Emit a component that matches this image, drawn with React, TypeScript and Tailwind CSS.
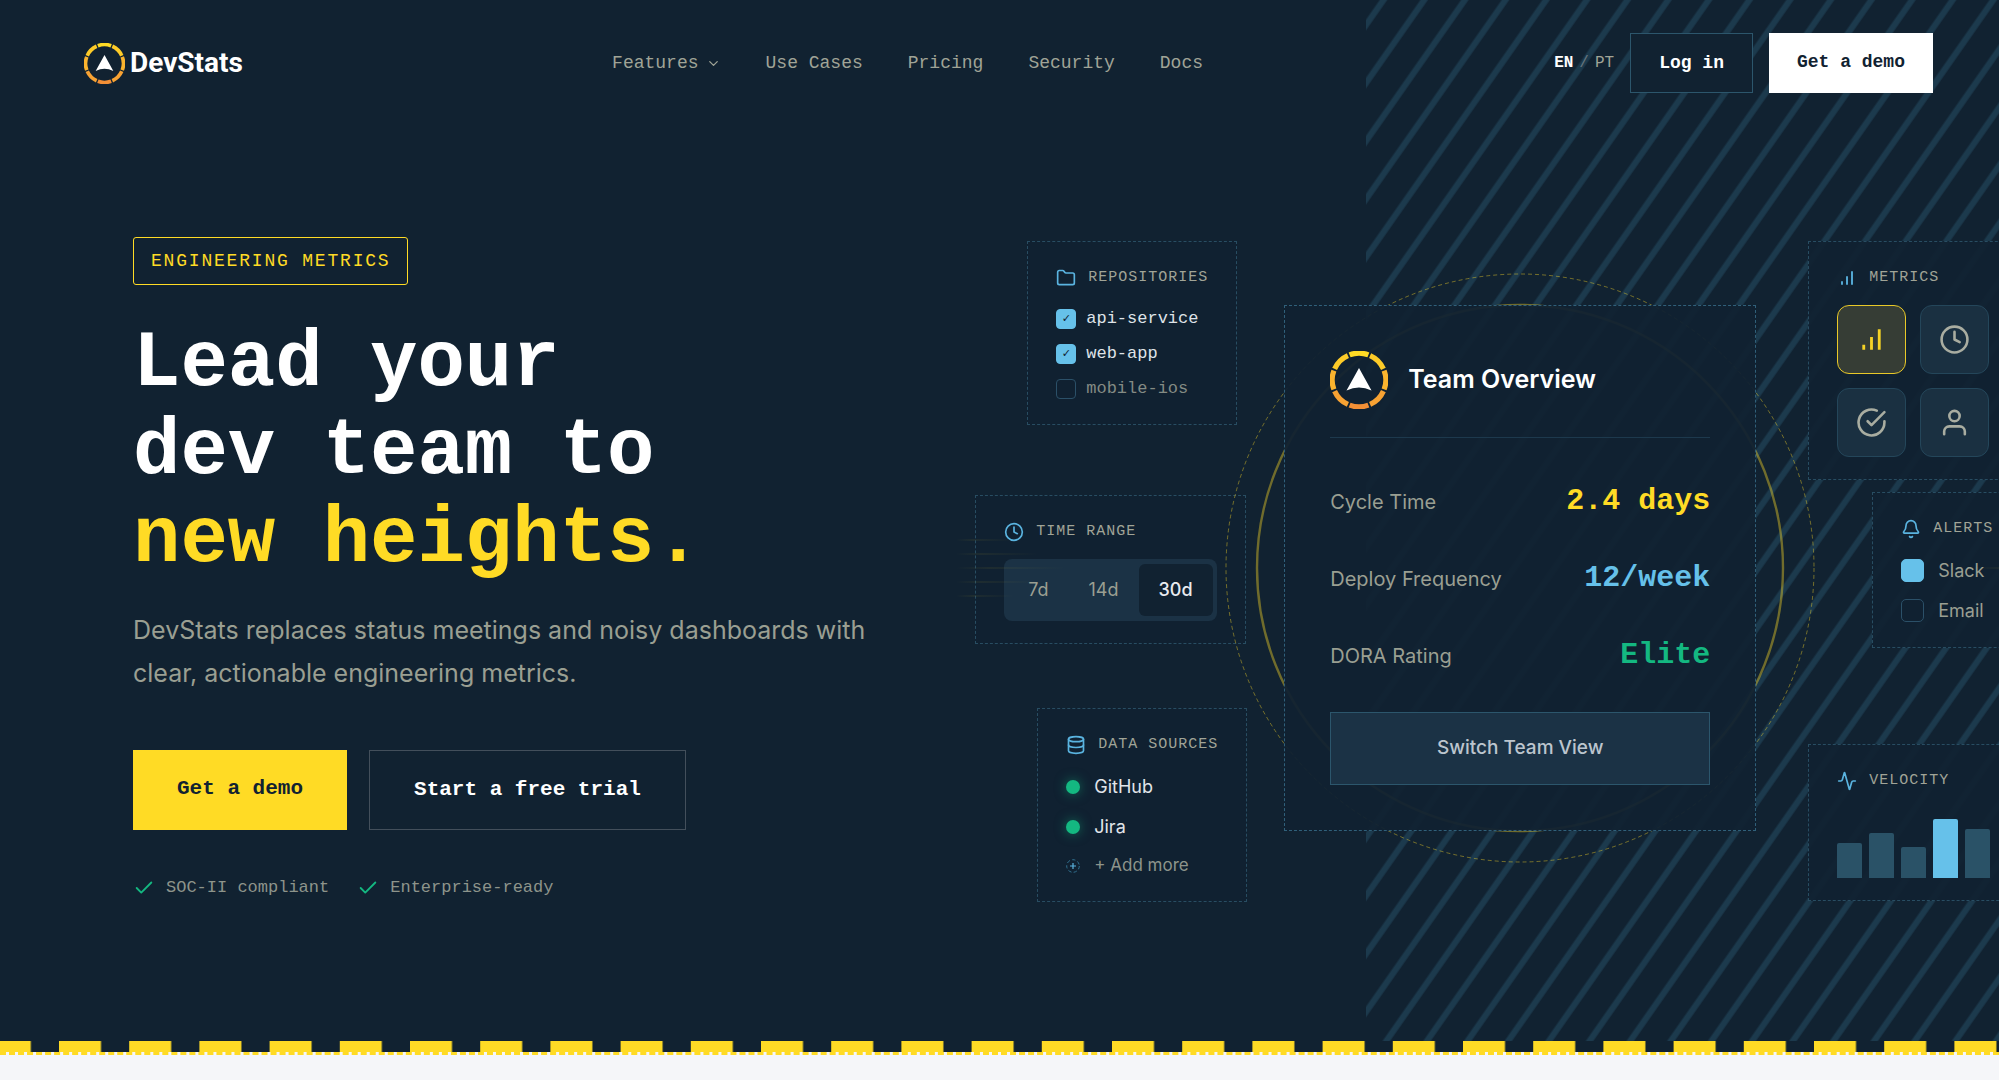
import React from 'react';
import { Activity, Bell, Check, ChevronDown, Clock, Database, Folder } from 'lucide-react';

const SEGMENTS = [
  { angle: 0, color: '#ffdb25' },
  { angle: 45, color: '#fdcb28' },
  { angle: 90, color: '#fbb42e' },
  { angle: 135, color: '#f7a233' },
  { angle: 180, color: '#f39036' },
  { angle: 225, color: '#f7a233' },
  { angle: 270, color: '#fbb42e' },
  { angle: 315, color: '#fdcb28' },
];

const LogoMark = ({ className }: { className: string }) => (
  <svg viewBox="0 0 58 58" fill="none" className={className} aria-hidden="true">
    {SEGMENTS.map((s) => (
      <path
        key={s.angle}
        d="M19.6 3.9 A26.2 26.2 0 0 1 38.4 3.9"
        transform={`rotate(${s.angle} 29 29)`}
        stroke={s.color}
        strokeWidth="5.2"
      />
    ))}
    <path d="M29 17 L41.5 39.5 Q29 33.5 16.5 39.5 Z" fill="#fff" />
  </svg>
);

const BarsIcon = ({ className }: { className: string }) => (
  <svg viewBox="0 0 24 24" fill="none" stroke="currentColor" strokeWidth="2.2" className={className} aria-hidden="true">
    <path d="M18 20V4M12 20V10M6 20v-4" />
  </svg>
);

const CheckCircleIcon = ({ className }: { className: string }) => (
  <svg viewBox="0 0 24 24" fill="none" stroke="currentColor" strokeWidth="2" strokeLinecap="round" strokeLinejoin="round" className={className} aria-hidden="true">
    <path d="M22 11.08V12a10 10 0 1 1-5.93-9.14" />
    <path d="M22 4 12 14.01l-3-3" />
  </svg>
);

const UserIcon = ({ className }: { className: string }) => (
  <svg viewBox="0 0 24 24" fill="none" stroke="currentColor" strokeWidth="2" strokeLinecap="round" strokeLinejoin="round" className={className} aria-hidden="true">
    <path d="M20 21v-2a4 4 0 0 0-4-4H8a4 4 0 0 0-4 4v2" />
    <circle cx="12" cy="7" r="4" />
  </svg>
);

type PanelProps = {
  icon: React.ReactNode;
  title: string;
  className: string;
  children: React.ReactNode;
};

const Panel = ({ icon, title, className, children }: PanelProps) => (
  <section className={`absolute border border-dashed border-[#284d62] bg-[#112231]/95 px-7 pt-[23px] pb-[22px] ${className}`}>
    <h3 className="mb-3.5 flex h-[26px] items-center gap-3 font-mono text-[15px] tracking-[1px] whitespace-nowrap text-[#a0a497] uppercase">
      <span className="text-[#5ab4e0]">{icon}</span>
      {title}
    </h3>
    {children}
  </section>
);

const REPOS = [
  { name: 'api-service', checked: true },
  { name: 'web-app', checked: true },
  { name: 'mobile-ios', checked: false },
];

const Repositories = () => (
  <Panel icon={<Folder className="size-5" />} title="Repositories" className="top-1 left-[67px]">
    <div className="flex flex-col gap-2">
      {REPOS.map((repo) => (
        <label
          key={repo.name}
          className={`flex h-[27px] items-center gap-2.5 font-mono text-[17px] whitespace-nowrap ${repo.checked ? 'text-[#dfe3e8]' : 'text-[#848b84]'}`}
        >
          <span className="relative flex size-5">
            <input
              type="checkbox"
              defaultChecked={repo.checked}
              className="peer size-5 appearance-none rounded border border-[#2b5068] checked:border-[#66c1ea] checked:bg-[#66c1ea]"
            />
            <span className="pointer-events-none absolute inset-0 hidden items-center justify-center font-['DejaVu_Sans'] text-[11px] leading-none text-[#112231] peer-checked:flex">
              ✓
            </span>
          </span>
          {repo.name}
        </label>
      ))}
    </div>
  </Panel>
);

const TimeRange = () => (
  <Panel icon={<Clock className="size-5" />} title="Time range" className="top-[258px] left-[15px]">
    <div className="flex rounded-lg bg-[#1b3245] px-1 py-[5px] text-lg">
      <button className="h-[52px] rounded-md px-5 text-[#9a9f92]">7d</button>
      <button className="h-[52px] rounded-md px-5 text-[#9a9f92]">14d</button>
      <button className="h-[52px] rounded-md bg-[#112231] px-5 font-medium text-[#e8ebef]">30d</button>
    </div>
  </Panel>
);

const DataSources = () => (
  <Panel icon={<Database className="size-5" />} title="Data sources" className="top-[471px] left-[77px]">
    <ul className="flex flex-col gap-2.5 text-lg text-[#e1e5ea]">
      {['GitHub', 'Jira'].map((name) => (
        <li key={name} className="flex h-[30px] items-center gap-3.5">
          <span className="size-3.5 rounded-full bg-[#14b881] shadow-[0_0_12px_rgba(20,184,129,0.5)]" />
          {name}
        </li>
      ))}
      <li>
        <button className="flex h-[27px] items-center gap-3.5 text-[17px] text-[#8d948b]">
          <svg viewBox="0 0 14 14" fill="none" className="size-3.5" aria-hidden="true">
            <circle cx="7" cy="7" r="6.3" stroke="#31708f" strokeDasharray="3.4 2.2" />
            <path d="M7 4v6M4 7h6" stroke="#5ab4e0" strokeWidth="1.2" />
          </svg>
          + Add more
        </button>
      </li>
    </ul>
  </Panel>
);

const Metrics = () => (
  <Panel icon={<BarsIcon className="size-5" />} title="Metrics" className="top-1 left-[848px]">
    <div className="grid w-[152px] grid-cols-2 gap-3.5 text-[#a9ada1]">
      <button aria-label="Throughput" className="flex h-[69px] items-center justify-center rounded-xl border border-[#e9c928] bg-[#363d35] text-[#f5d226]">
        <BarsIcon className="size-[31px]" />
      </button>
      <button aria-label="Cycle time" className="flex h-[69px] items-center justify-center rounded-xl border border-[#24465a] bg-[#1a3041]">
        <Clock className="size-[31px]" />
      </button>
      <button aria-label="Reviews" className="flex h-[69px] items-center justify-center rounded-xl border border-[#24465a] bg-[#1a3041]">
        <CheckCircleIcon className="size-[31px]" />
      </button>
      <button aria-label="People" className="flex h-[69px] items-center justify-center rounded-xl border border-[#24465a] bg-[#1a3041]">
        <UserIcon className="size-[31px]" />
      </button>
    </div>
  </Panel>
);

const Alerts = () => (
  <Panel icon={<Bell className="size-5" />} title="Alerts" className="top-[255px] left-[912px]">
    <div className="flex flex-col gap-[11px] text-lg text-[#9a9f92]">
      {['Slack', 'Email'].map((name, i) => (
        <label key={name} className="flex h-[29px] items-center gap-3.5">
          <input
            type="checkbox"
            defaultChecked={i === 0}
            className="size-[23px] appearance-none rounded-[5px] border border-[#2b5068] checked:border-[#66c1ea] checked:bg-[#66c1ea]"
          />
          {name}
        </label>
      ))}
    </div>
  </Panel>
);

const BARS = [35, 45, 31, 59, 49];

const Velocity = () => (
  <Panel icon={<Activity className="size-5" />} title="Velocity" className="top-[507px] left-[848px]">
    <div className="flex h-[70px] items-end gap-[7px]">
      {BARS.map((height, i) => (
        <div
          key={i}
          className={`w-[25px] rounded-t-xs ${i === 3 ? 'bg-[#66c1ea]' : 'bg-[#2a5267]'}`}
          style={{ height }}
        />
      ))}
    </div>
  </Panel>
);

const STATS = [
  { label: 'Cycle Time', value: '2.4 days', color: 'text-[#ffdb25]' },
  { label: 'Deploy Frequency', value: '12/week', color: 'text-[#66c1ea]' },
  { label: 'DORA Rating', value: 'Elite', color: 'text-[#14b881]' },
];

const TeamOverview = () => (
  <section className="absolute top-[68px] left-[324px] w-[472px] border border-dashed border-[#30607a] bg-[#112231]/95 p-[45px]">
    <div className="mb-[25px] flex items-center gap-5 border-b border-[#1d394d] pb-7">
      <LogoMark className="size-[58px]" />
      <h2 className="text-[25px] font-semibold text-white">Team Overview</h2>
    </div>
    <dl>
      {STATS.map((stat) => (
        <div key={stat.label} className="flex h-[77px] items-center justify-between">
          <dt className="text-[20px] text-[#9a9f92]">{stat.label}</dt>
          <dd className={`font-mono text-[30px] font-bold ${stat.color}`}>{stat.value}</dd>
        </div>
      ))}
    </dl>
    <button className="mt-[18px] h-[73px] w-full border border-[#2c566c] bg-[#1b3245] text-[19px] font-medium text-[#bcc5ce]">
      Switch Team View
    </button>
  </section>
);

const Rings = () => (
  <svg viewBox="0 0 1120 662" fill="none" className="pointer-events-none absolute inset-0 size-full overflow-visible" aria-hidden="true">
    <defs>
      <linearGradient id="speed">
        <stop offset="0" stopColor="#ffdb25" stopOpacity="0" />
        <stop offset="0.3" stopColor="#ffdb25" stopOpacity="0.06" />
        <stop offset="1" stopColor="#ffdb25" stopOpacity="0" />
      </linearGradient>
    </defs>
    {[58, 82, 110, 82, 58].map((width, i) => (
      <g key={i} fill="url(#speed)">
        <rect x="-4" y={302 + i * 14} width={width} height="2" />
        <rect x={1122 - width} y={302 + i * 14} width={width} height="2" />
      </g>
    ))}
    <circle cx="560" cy="331" r="294" stroke="#ffdb25" strokeOpacity="0.42" strokeDasharray="4 3" />
    <circle cx="560" cy="331" r="263" stroke="#ffdb25" strokeOpacity="0.4" strokeWidth="2.4" />
  </svg>
);

const Hatching = () => (
  <svg className="absolute inset-y-0 right-0 h-full w-[633px]" aria-hidden="true">
    <defs>
      <pattern id="hatch" width="33.3" height="33.3" patternUnits="userSpaceOnUse" patternTransform="rotate(35)">
        <rect x="11.3" width="6" height="33.3" fill="#1c3a4d" />
      </pattern>
    </defs>
    <rect width="100%" height="100%" fill="url(#hatch)" />
  </svg>
);

const Battlements = () => (
  <svg className="block h-[11px] w-full" aria-hidden="true">
    <defs>
      <pattern id="blocks" x="-11.2" width="70.2" height="11" patternUnits="userSpaceOnUse">
        <rect width="42" height="11" fill="#ffdb25" />
      </pattern>
    </defs>
    <rect width="100%" height="11" fill="url(#blocks)" />
  </svg>
);

const Header = () => (
  <header className="relative flex items-center justify-between pt-[33px] pr-[66px] pb-8 pl-[67px] font-mono">
    <a href="#" className="flex w-[194px] items-center gap-[5px] pl-[17px]">
      <LogoMark className="size-[41px]" />
      <span className="font-['Roboto',sans-serif] text-[28px] leading-none font-bold text-white">DevStats</span>
    </a>
    <nav className="flex items-center gap-[45px] text-lg text-[#a0a497]">
      <button className="flex items-center gap-[7px]">
        Features
        <ChevronDown className="size-[15px]" />
      </button>
      <a href="#use-cases">Use Cases</a>
      <a href="#pricing">Pricing</a>
      <a href="#security">Security</a>
      <a href="#docs">Docs</a>
    </nav>
    <div className="flex items-center gap-4">
      <div className="flex items-center gap-1.5 text-base">
        <a href="#en" className="font-bold text-white">EN</a>
        <span className="text-[#66747e]">/</span>
        <a href="#pt" className="text-[#a0a497]">PT</a>
      </div>
      <a href="#login" className="flex h-[60px] items-center border border-[#2c566c] bg-[#112231] px-7 text-lg font-bold text-white">
        Log in
      </a>
      <a href="#demo" className="flex h-[60px] items-center bg-white px-7 pb-0.5 text-lg font-bold text-[#112231]">
        Get a demo
      </a>
    </div>
  </header>
);

const Intro = () => (
  <div className="w-[52.1%] pl-[133px]">
    <p className="flex h-12 w-fit items-center rounded-[3px] border border-[#ffdb25] px-[17px] font-mono text-lg tracking-widest text-[#ffdb25] uppercase">
      Engineering metrics
    </p>
    <h1 className="mt-[35px] font-mono text-[79px] leading-[88px] font-bold text-white">
      Lead your
      <br />
      dev team to
      <br />
      <span className="text-[#ffdb25]">new heights.</span>
    </h1>
    <p className="mt-[25px] max-w-[760px] text-[25px] leading-[43px] text-[#9a9f92]">
      DevStats replaces status meetings and noisy dashboards with clear, actionable engineering metrics.
    </p>
    <div className="mt-[55px] flex gap-[22px] font-mono text-[21px] font-bold">
      <a href="#demo" className="flex h-20 items-center bg-[#ffdb25] px-11 pb-0.5 text-[#112231]">
        Get a demo
      </a>
      <a href="#trial" className="flex h-20 items-center border border-[#434f5b] px-11 text-white">
        Start a free trial
      </a>
    </div>
    <ul className="mt-11 flex gap-7 font-mono text-[17px] leading-7 text-[#8d948b]">
      {['SOC-II compliant', 'Enterprise-ready'].map((text) => (
        <li key={text} className="flex items-center gap-[11px]">
          <Check className="size-[22px] text-[#14b881]" />
          {text}
        </li>
      ))}
    </ul>
  </div>
);

export default function App() {
  return (
    <div className="min-h-screen overflow-hidden bg-[#f5f6f9] font-['Inter','Liberation_Sans',sans-serif] [--default-mono-font-family:'Liberation_Mono',monospace] [--font-mono:'Liberation_Mono',monospace]">
      <div className="bg-[#112231]">
        <div className="relative">
          <Hatching />
          <Header />
          <main className="relative flex items-start pt-28 pb-[139px]">
            <Intro />
            <div className="flex min-w-0 flex-1 justify-center">
              <div className="relative h-[662px] w-[1120px] shrink-0">
                <Repositories />
                <TimeRange />
                <DataSources />
                <Metrics />
                <Alerts />
                <Velocity />
                <Rings />
                <TeamOverview />
              </div>
            </div>
          </main>
        </div>
        <Battlements />
      </div>
      <div className="border-t-3 border-dashed border-[#ffdb25]" />
    </div>
  );
}
